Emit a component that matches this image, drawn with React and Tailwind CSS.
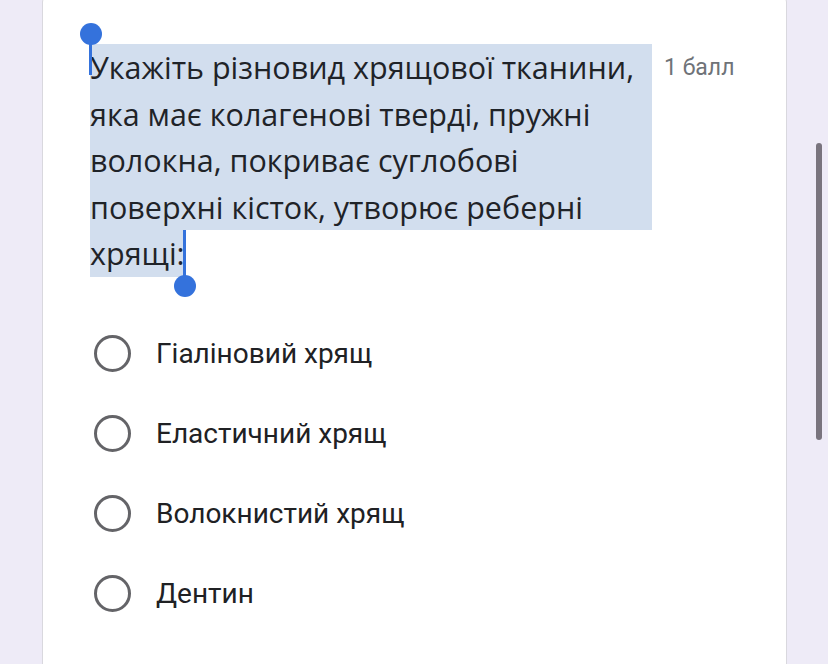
// Single quiz question card with a text selection over the prompt.
const question = [
  "Укажіть різновид хрящової тканини,",
  "яка має колагенові тверді, пружні",
  "волокна, покриває суглобові",
  "поверхні кісток, утворює реберні",
];

const options = ["Гіаліновий хрящ", "Еластичний хрящ", "Волокнистий хрящ", "Дентин"];

function Radio() {
  return <span className="block h-[37px] w-[37px] shrink-0 rounded-full border-[3.5px] border-[#646468]" />;
}

export default function App() {
  return (
    <div className="relative h-[664px] w-[828px] overflow-hidden bg-[#eeebf7]">
      <section className="-mt-[10px] ml-[42px] h-[700px] w-[745px] rounded-[12px] border border-[#d9d8de] bg-white pt-[53px]">
        <div className="flex pl-[47px]">
          <div
            className="relative w-[562px] text-[30.5px] leading-[46.5px] text-[#1f2328]"
            style={{ fontFamily: '"Open Sans", "Noto Sans", sans-serif' }}
          >
            <div className="bg-[#d2deee]">
              {question.map((line) => (
                <div key={line} className="whitespace-nowrap">
                  {line}
                </div>
              ))}
            </div>
            <div>
              <span className="inline-block w-[95px] bg-[#d2deee]">хрящі:</span>
            </div>

            {/* selection handles */}
            <span className="absolute -top-[21px] -left-[10px] h-[22px] w-[22px] rounded-full bg-[#3472dc]" />
            <span className="absolute -top-[10px] -left-[1px] h-[41px] w-[3px] bg-[#3472dc]" />
            <span className="absolute top-[186px] left-[93px] h-[52px] w-[3px] bg-[#3472dc]" />
            <span className="absolute top-[231px] left-[84px] h-[22px] w-[22px] rounded-full bg-[#3472dc]" />
          </div>
          <span
            className="ml-[12px] pt-[1px] text-[23px] leading-[46px] text-[#6f7378]"
            style={{ fontFamily: "Roboto, sans-serif" }}
          >
            1 балл
          </span>
        </div>

        <ul className="mt-[37px] pl-[51px]" style={{ fontFamily: "Roboto, sans-serif" }}>
          {options.map((option) => (
            <li key={option} className="flex h-[80px] items-center gap-[25px]">
              <Radio />
              <span className="text-[28px] text-[#202124]">{option}</span>
            </li>
          ))}
        </ul>
      </section>

      {/* page scrollbar */}
      <span className="absolute top-[143px] left-[816px] h-[297px] w-[6px] rounded-full bg-[#79747e]" />
    </div>
  );
}
